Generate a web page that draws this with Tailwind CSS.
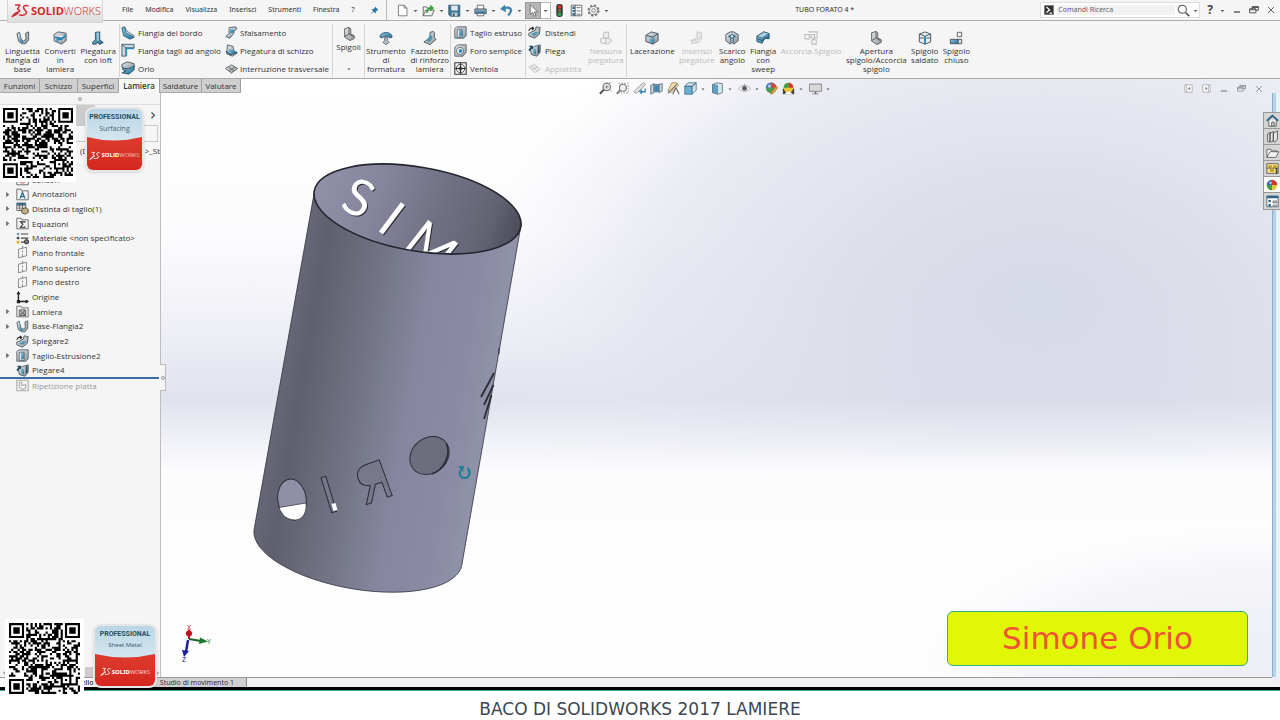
<!DOCTYPE html>
<html lang="it">
<head>
    <meta charset="UTF-8">
    <meta name="viewport" content="width=device-width, initial-scale=1.0">
    <title>TUBO FORATO 4 - SOLIDWORKS</title>
    <script src="https://cdn.jsdelivr.net/npm/@tailwindcss/browser@4"></script>
</head>
<body class="bg-white font-['Noto_Sans',sans-serif] text-[7px] text-[#333]">

    <!-- Icon sprite -->
    <svg class="absolute size-0" aria-hidden="true">
        <linearGradient id="steel" x1="0" y1="0" x2="1" y2="1"><stop offset="0" stop-color="#e3e8eb"/><stop offset="1" stop-color="#8e999f"/></linearGradient>
        <linearGradient id="blue" x1="0" y1="0" x2="1" y2="1"><stop offset="0" stop-color="#8cc3df"/><stop offset="1" stop-color="#256f96"/></linearGradient>
        <symbol id="ds" viewBox="0 0 24 22">
            <g fill="none" stroke="currentColor" stroke-linecap="round" stroke-linejoin="round">
                <path stroke-width="1.8" d="M6 3h6L8.500 8.500c4 0 3 4-.5 6.500C5.500 17 3 18 1.500 18.500 4 15 8 12.500 12 11"/>
                <path stroke-width="2" d="M22.500 4c-4-1-7 .5-5.500 3.500 1 2.500 4.500 4 3.500 6.500-1 2-5 3-9 2.500"/>
            </g>
        </symbol>
        <symbol id="caret" viewBox="0 0 8 8"><path fill="#555" d="M1 3h6L4 6.500z"/></symbol>
        <symbol id="pin" viewBox="0 0 16 16"><path fill="#2c79ae" d="M9 1l6 6-2 .5-2.500 2.500-.5 3.500L6.500 10 1 15l4.500-6L2.500 6 6 5.500 8.500 3z"/></symbol>
        <symbol id="new" viewBox="0 0 16 16"><path fill="#fff" stroke="#666" d="M3 1.500h7l3.500 3.500v9.500H3zM10 1.500V5h3.500"/></symbol>
        <symbol id="open" viewBox="0 0 16 16"><path fill="#f3f3f3" stroke="#555" d="M1.500 14.500V3.500h4l1 1.500H12v3M1.500 14.500l3-7h10.500l-3 7z"/><path fill="none" stroke="#35a13a" stroke-width="2" d="M6 11c0-5 2-6 5-6"/><path fill="#35a13a" d="M10 1l5 4-5 4z"/></symbol>
        <symbol id="save" viewBox="0 0 16 16"><path fill="#3f7897" stroke="#29536b" d="M1 1.500h13.500V15H3l-2-2z"/><path fill="#dde8ee" d="M4 2h8v6H4z"/><path fill="#c3ced4" d="M4.500 10.500h7V15h-7z"/><path fill="#29536b" d="M6 11.500h2V15H6z"/></symbol>
        <symbol id="print" viewBox="0 0 16 16"><path fill="#fff" stroke="#555" d="M4 6V1.500h8V6"/><path fill="#8ca0ac" stroke="#4a5a64" d="M1 6h14v6H1z"/><path fill="#2f7eaa" d="M2 9h12v2H2z"/><path fill="#fff" stroke="#555" d="M4 11.500h8v3H4z"/></symbol>
        <symbol id="undo" viewBox="0 0 16 16"><path fill="none" stroke="#3a82b0" stroke-width="2.800" d="M4 5.500c6-2.500 10-.5 9.500 3-.3 2-1.500 3.500-3.500 5.500"/><path fill="#3a82b0" d="M0 6l6-5 1.500 9z"/></symbol>
        <symbol id="arrow" viewBox="0 0 16 16"><path fill="#fff" stroke="#444" stroke-width=".8" d="M4 1v12l3-2.500L9 15l2-1-2-4.200 4-.3z"/></symbol>
        <symbol id="light" viewBox="0 0 16 16"><rect x="4" y="0" width="8" height="16" rx="3" fill="#3c3c3c"/><circle cx="8" cy="3.500" r="2.300" fill="#d33"/><circle cx="8" cy="8" r="1.900" fill="#7a6a3a"/><circle cx="8" cy="12.500" r="2.300" fill="#2da44a"/></symbol>
        <symbol id="props" viewBox="0 0 16 16"><path fill="#fff" stroke="#555" d="M1.500 1.500h13v13h-13z"/><path fill="#2d6f93" d="M3 3h3v3H3zm0 4h3v3H3zm0 4h3v3H3z"/><path stroke="#555" d="M6.500 1.500v13M8 4.500h5M8 8.500h5M8 12.500h5"/></symbol>
        <symbol id="gear" viewBox="0 0 16 16"><circle cx="8" cy="8" r="6.300" fill="none" stroke="#777" stroke-width="2.200" stroke-dasharray="2.600 2.350"/><circle cx="8" cy="8" r="5.200" fill="#f4f4f4" stroke="#666"/><circle cx="8" cy="8" r="2.200" fill="#fff" stroke="#666"/></symbol>
        <symbol id="cmd" viewBox="0 0 16 16"><path fill="#333" stroke="#888" d="M.5.5h15v15H.5z"/><path fill="none" stroke="#fff" stroke-width="2" d="M4 3l5 5-5 4M9 13h4"/></symbol>
        <symbol id="lens" viewBox="0 0 16 16"><circle cx="6.500" cy="6.500" r="5" fill="#fff" stroke="#555" stroke-width="1.300"/><path stroke="#555" stroke-width="2" d="M10.500 10.500l4.500 4.500"/></symbol>
        <symbol id="min" viewBox="0 0 16 16"><path stroke="currentColor" stroke-width="2.500" d="M2 12h12"/></symbol>
        <symbol id="restore" viewBox="0 0 16 16"><path fill="none" stroke="currentColor" stroke-width="1.400" d="M5 6V2.500h10v6h-4M1 6h10v6.500H1zM1 7.500h10M5 4h10"/></symbol>
        <symbol id="close" viewBox="0 0 16 16"><path stroke="currentColor" stroke-width="1.600" d="M2 2l12 12M14 2L2 14"/></symbol>
        <symbol id="dockl" viewBox="0 0 16 16"><path fill="#fff" stroke="#888" d="M1.500 1.500h13v13h-13zM4.500 1.500v13"/><path fill="#777" d="M11 5v6L7 8z"/></symbol>
        <symbol id="dockr" viewBox="0 0 16 16"><path fill="#fff" stroke="#888" d="M1.500 1.500h13v13h-13zM11.500 1.500v13"/><path fill="#777" d="M6 5v6l4-3z"/></symbol>

        <symbol id="base" viewBox="0 0 16 16"><path fill="url(#steel)" stroke="#48545c" d="M1 3l3-1.500 2 8 2.500 2 3-2-.5-7L14.500 1v9l-3.500 4.500H7L3 12z"/><path fill="url(#blue)" d="M4 2l2 7.500 2.500 2L7 14l-3-2.500z"/></symbol>
        <symbol id="convert" viewBox="0 0 16 16"><path fill="url(#steel)" stroke="#48545c" d="M1 4l5-3 9 1.500V11l-5 4-8.500-3.500z"/><path fill="#f5f5f5" d="M4 5l8 1v5l-8-2z"/><path fill="none" stroke="#3287b0" stroke-width="2" d="M2 7l9 1.500 3.500-4M5 12V9l6 1"/></symbol>
        <symbol id="loft" viewBox="0 0 16 16"><path fill="url(#blue)" stroke="#2b5267" d="M5 1.500l5-.5v9l4 3-3 2H9L8 12l-2 3H2l-.5-2L5 10z"/><path fill="#a5c8d9" d="M7 2h2v9H7z"/></symbol>
        <symbol id="edge" viewBox="0 0 16 16"><path fill="url(#blue)" stroke="#285e7b" d="M1 2l3-1 2 5 8 5 1 2-5 2-7-4z"/><path fill="#cce0e9" stroke="#3f5966" stroke-width=".7" d="M4 1l3 5 8 5-1 1-8-4z"/></symbol>
        <symbol id="miter" viewBox="0 0 16 16"><path fill="#bfd8e4" stroke="#47565f" d="M1 1.500h14v4H5.500V15H1z"/><path fill="#3089b2" d="M5.500 5.500H15V7H7v8H5.500z"/><path stroke="#47565f" d="M1 1.500l4.500 4"/></symbol>
        <symbol id="hem" viewBox="0 0 16 16"><path fill="url(#steel)" stroke="#475058" d="M1 4l6-3 8 2v4l-5 2H4L1 7z"/><path fill="url(#blue)" stroke="#244c61" d="M2 7.500c4 2.500 9 1 13-2V10l-6 5-8-1.500 5-2.500-4-1z"/></symbol>
        <symbol id="jog" viewBox="0 0 16 16"><path fill="url(#steel)" stroke="#48545c" d="M5 2l8-1 2 2-4 3v3l-5 6-5-2 4-4z"/><path fill="url(#blue)" d="M5 3l6 2v3L7 9 5 7z"/></symbol>
        <symbol id="sketchbend" viewBox="0 0 16 16"><path fill="url(#steel)" stroke="#48545c" d="M3 1l7 2 1 6 4 2-6 4-7-3z"/><path fill="url(#blue)" d="M5 6l6 1 3 3-6 1-4-2z"/><path fill="none" stroke="#245a78" stroke-width="1.400" d="M1 9l6 4 8-3"/></symbol>
        <symbol id="cross" viewBox="0 0 16 16"><path fill="url(#steel)" stroke="#555" d="M.5 8L8 3.500 15.500 8 8 13.500z"/><path stroke="#555" stroke-width=".9" d="M4 6l7 5M12 6l-7 5"/></symbol>
        <symbol id="corner" viewBox="0 0 16 16"><path fill="url(#steel)" stroke="#555" d="M3 2l5-1.500L10 2v6l4 2v3l-5 2.500-6-4z"/><path fill="none" stroke="#555" d="M8 1v7l-5 3M8 8l5 3"/></symbol>
        <symbol id="form" viewBox="0 0 16 16"><path fill="url(#blue)" stroke="#2c5a72" d="M1 7c0-7 14-7 14 0l-3 1-2-2H6L4 8z"/><path fill="#b7c3c9" stroke="#556069" d="M6.500 7h3v4l2 2-3.500 2.500L4.500 13l2-2z"/></symbol>
        <symbol id="gusset" viewBox="0 0 16 16"><path fill="url(#steel)" stroke="#48545c" d="M8 1.500l4-1 1 1v6l2 2-7 6-7-3 7-5z"/><path fill="url(#blue)" d="M8 3l3 4-3 5-4 0z"/></symbol>
        <symbol id="cut" viewBox="0 0 16 16"><path fill="url(#steel)" stroke="#4d5960" d="M1 3l3-2h11v11l-3 3H1z"/><path fill="#f7f7f7" stroke="#4d5960" d="M4 4h6v10H4z"/><path fill="url(#blue)" d="M6 4.500h4V12L6 13.500z"/></symbol>
        <symbol id="hole" viewBox="0 0 16 16"><path fill="url(#steel)" stroke="#4d5960" d="M1 4l4-3h10v9l-4 5H1z"/><circle cx="7.500" cy="8.500" r="4.300" fill="#fff" stroke="#4d5960"/><circle cx="8" cy="8.500" r="2.300" fill="#2f86b0"/></symbol>
        <symbol id="vent" viewBox="0 0 16 16"><path fill="#f7f7f7" stroke="#333" stroke-width="1.300" d="M1 1h14v14H1z"/><circle cx="8" cy="8" r="5" fill="none" stroke="#333"/><circle cx="8" cy="8" r="2" fill="none" stroke="#333"/><path stroke="#333" stroke-width="1.400" d="M8 1v14M1 8h14"/></symbol>
        <symbol id="unfold" viewBox="0 0 16 16"><path fill="url(#steel)" stroke="#3f4b52" d="M1 9l8-4 1-4 5 1-1 8-6 5-7-3z"/><path fill="url(#blue)" d="M3 10l6-3 4 1-5 4z"/><path fill="none" stroke="#222" stroke-width="1.300" d="M1 6c1-3 3-4 5-3M5 1l2 2-2 2"/></symbol>
        <symbol id="fold" viewBox="0 0 16 16"><path fill="url(#steel)" stroke="#3f4b52" d="M3 6l5-3 7-2v9l-4 5-7-2z"/><path fill="url(#blue)" d="M7 5l3 2v6l-4-1z"/><path fill="#1c4660" d="M12 3l2-1v8l-2 2zM1 2h5v5L4.500 5.500 2 9 .5 7.500 3 4z"/></symbol>
        <symbol id="flat" viewBox="0 0 16 16"><path fill="#eee" stroke="#bbb" d="M1 6l7-3 7 6-6 4z"/><path fill="none" stroke="#bbb" d="M4 5l8 6M12 6l-7 3"/></symbol>
        <symbol id="nobend" viewBox="0 0 16 16"><path fill="#eaeaea" stroke="#bbb" d="M5 2l6-1v7H5zM2 9l9-1 4 3-5 4-8-2z"/><circle cx="5" cy="11" r="3" fill="#f4f4f4" stroke="#bbb"/></symbol>
        <symbol id="insbend" viewBox="0 0 16 16"><path fill="#eaeaea" stroke="#c2c2c2" d="M8 1l5 1v7l-3 4-8 1-1-3 7-3z"/><path fill="none" stroke="#c2c2c2" d="M2 11l7-1 3-3"/></symbol>
        <symbol id="rip" viewBox="0 0 16 16"><path fill="url(#steel)" stroke="#3f4b52" d="M1 5l6-4 8 2v8l-6 4-8-3z"/><path fill="none" stroke="#3f4b52" d="M1 5l8 2 6-4M9 7v8"/><path fill="url(#blue)" d="M5 7l3 1 4 2-3 4-4-2z"/></symbol>
        <symbol id="relief" viewBox="0 0 16 16"><path fill="url(#steel)" stroke="#3f4b52" d="M1 4l5-3h4l5 3v7l-5 4-2-2-2 2-5-4z"/><path fill="#27607f" d="M4 5h8v2h-2v6H9V7H7v6H6V7H4z"/><circle cx="8" cy="6" r="2" fill="#d9e7ee" stroke="#27607f"/></symbol>
        <symbol id="sweep" viewBox="0 0 16 16"><path fill="url(#blue)" stroke="#22526c" d="M1 6l8-5 6 2v6l-5-1-3 6-6-2z"/><path fill="#a9cfe0" stroke="#22526c" stroke-width=".7" d="M1 6l8-5 6 2-8 5z"/><path stroke="#22526c" d="M2 9l5 2 8-5" fill="none"/></symbol>
        <symbol id="trim" viewBox="0 0 16 16"><path fill="none" stroke="#bdbdbd" stroke-width="1.200" d="M5 1h10v7h-3M1 4h5v5H1zM8 4h4v4H8zM9 10h5v5H9zM6 6.500h2M11 8v2"/></symbol>
        <symbol id="weld" viewBox="0 0 16 16"><path fill="#e5ebee" stroke="#3f4b52" d="M1.500 3.500L8 1l6.500 2.500v9L8 15l-6.500-2.500z"/><path fill="none" stroke="#3f4b52" d="M1.500 3.500L8 6l6.500-2.500M1.500 8h5M9.500 8h5"/><path stroke="#2f86b0" stroke-width="2.200" d="M8 6v9"/></symbol>
        <symbol id="closed" viewBox="0 0 16 16"><path fill="#f7f7f7" stroke="#555" d="M9.500 1.500h5v5h-5z"/><path fill="url(#blue)" stroke="#3f4b52" d="M1.500 9.500h9v5h-9z"/><path fill="#ddd" stroke="#3f4b52" d="M10.500 9.500h4v5h-4z"/></symbol>

        <symbol id="zoomfit" viewBox="0 0 16 16"><circle cx="9.500" cy="6" r="4.500" fill="#eef3f6" stroke="#777" stroke-width="1.500"/><path stroke="#555" stroke-width="2.500" d="M6 9.500L1 14.500"/><path stroke="#777" d="M9.500 3.500v5M7 6h5M13 1l2-1M14 10l2 2"/></symbol>
        <symbol id="zoomarea" viewBox="0 0 16 16"><path fill="none" stroke="#888" stroke-dasharray="2 1.500" d="M3 1.500h12v12H6"/><circle cx="8.500" cy="7" r="4.300" fill="#eef3f6" stroke="#777" stroke-width="1.300"/><path stroke="#777" stroke-width="2.300" d="M5.500 10L1 14.500"/></symbol>
        <symbol id="prev" viewBox="0 0 16 16"><path fill="#e4e4e4" stroke="#888" d="M1 12l8-8 4-3 2 2-3 4-8 7z"/><path fill="none" stroke="#3b89b5" stroke-width="1.600" d="M15 8v4H9M11 9.500L8.500 12l2.500 2.500"/></symbol>
        <symbol id="section" viewBox="0 0 16 16"><path fill="#c7d9e3" stroke="#4d6471" d="M1 4l4-2v11l-4 2zM5 3h6v9H5zM11 3l4-1v9l-4 2z"/><path fill="#3d8ab2" d="M6 4h4v8H6z"/></symbol>
        <symbol id="style" viewBox="0 0 16 16"><path fill="#f5dfae" stroke="#9a8456" d="M6 1l6 0 2 3-9 9-4-2z"/><path stroke="#6b6b6b" stroke-width="1.400" d="M1 14L12 3M11 7l4 8M11 7l-4 8"/></symbol>
        <symbol id="orient" viewBox="0 0 16 16"><path fill="#6fb0d0" stroke="#3e6b82" d="M1 5h9v10H1z"/><path fill="#d7e6ee" stroke="#3e6b82" d="M1 5l4-4h10l-5 4zM10 5l5-4v9l-5 5z"/></symbol>
        <symbol id="cube" viewBox="0 0 16 16"><path fill="#d7e6ee" stroke="#566c78" d="M2 3l5-2 7 1v11l-5 2-7-2z"/><path fill="#5ba4c8" stroke="#566c78" stroke-width=".7" d="M2 3l6 1v11l-6-2z"/></symbol>
        <symbol id="eye" viewBox="0 0 16 16"><path fill="#fff" stroke="#999" d="M1 8c4-5 10-5 14 0-4 4.500-10 4.500-14 0z"/><circle cx="8" cy="7.800" r="3" fill="#5c5c5c"/><path stroke="#999" d="M8 2v2"/></symbol>
        <symbol id="ball" viewBox="0 0 16 16"><circle cx="8" cy="8" r="7" fill="#e8c53c"/><path fill="#d5332c" d="M8 1a7 7 0 0 1 7 7H8z"/><path fill="#2f66bd" d="M8 1a7 7 0 0 0-7 7h7z"/><path fill="#36a04b" d="M1 8a7 7 0 0 0 7 7V8z"/><circle cx="6" cy="5" r="2" fill="#fff" opacity=".5"/></symbol>
        <symbol id="appear" viewBox="0 0 16 16"><circle cx="7.500" cy="7" r="6.500" fill="#4a9a52"/><path fill="#d5453c" d="M7.500.5A6.500 6.500 0 0 1 14 7H7.500z"/><path fill="#4a7fc6" d="M7.500.5A6.500 6.500 0 0 0 1 7h6.500z"/><circle cx="5.500" cy="5" r="2" fill="#fff" opacity=".6"/><path fill="#e6a83a" stroke="#8a5a22" stroke-width=".7" d="M14 5l2 2-6 7-3 1 1-3z"/></symbol>
        <symbol id="scene" viewBox="0 0 16 16"><path fill="#444" d="M1 8h14v7H1z"/><circle cx="8" cy="7" r="6" fill="#e8c53c"/><path fill="#d5332c" d="M8 1a6 6 0 0 1 6 6H8z"/><path fill="#36a04b" d="M8 1a6 6 0 0 0-6 6h6z"/><path fill="#fff" d="M3 15l3-3h4l3 3z"/></symbol>
        <symbol id="screen" viewBox="0 0 16 16"><path fill="#d8d8d8" stroke="#777" d="M.5 2.500h15v9H.5z"/><path fill="#777" d="M7 12h2v2h3v1H4v-1h3z"/></symbol>

        <symbol id="home" viewBox="0 0 16 16"><path fill="#fff" stroke="#444" d="M3.500 8v7h9V8M7 15v-5h3v5"/><path fill="none" stroke="#25607f" stroke-width="2.200" d="M1 8.500L8 2l7 6.500"/></symbol>
        <symbol id="library" viewBox="0 0 16 16"><path fill="#e9e9e9" stroke="#444" d="M2 5l3-2v10l-1 2-2-1zM5 4l4-2v10l-2 3-2-1zM9 4l5-3v10l-3 4-2-1z"/></symbol>
        <symbol id="folder" viewBox="0 0 16 16"><path fill="#f3f3f3" stroke="#555" d="M1 14V4h5l1 2h6v2M1 14l4-7h11l-4 7z"/></symbol>
        <symbol id="palette" viewBox="0 0 16 16"><path fill="#f6e28d" stroke="#555" d="M1 2h14v12H1z"/><path fill="#c79a16" d="M3 4h4v3H3zm6 0h4v3H9zM5 9h5v3H5z"/><path fill="#444" d="M12 8h2v6h-2zM1 7h14v1H1z"/></symbol>
        <symbol id="list" viewBox="0 0 16 16"><path fill="#fff" stroke="#3e5d6d" d="M1 1.500h14v13H1z"/><path fill="#2c6685" d="M1 1h14v3H1zM3 6h3v3H3zm0 5h3v3H3z"/><path stroke="#444" d="M8 7.500h6M8 9.500h6M8 12.500h6"/></symbol>

        <symbol id="fsens" viewBox="0 0 16 16"><path fill="#f5f5f5" stroke="#555" d="M1 14.500v-13h5l1 2h8v11z"/><circle cx="8" cy="9" r="3.500" fill="none" stroke="#c33"/><path stroke="#c33" d="M8 9l2-3"/></symbol>
        <symbol id="fann" viewBox="0 0 16 16"><path fill="#f5f5f5" stroke="#555" d="M1 14.500v-13h5l1 2h8v11z"/><path fill="none" stroke="#23678c" stroke-width="1.500" d="M5 13l3-7.500 3 7.500M6 10.500h4"/></symbol>
        <symbol id="fcut" viewBox="0 0 16 16"><path fill="#fff" stroke="#555" d="M1 1.500h11v9H1zM1 4.500h11M4.500 1.500v9M8 1.500v9M1 7.500h11"/><path fill="#2c6685" d="M1 1h11v2.500H1z"/><path fill="#c3b184" stroke="#444" d="M7 9l5-2 3 2v4l-4 2-4-2z"/></symbol>
        <symbol id="feq" viewBox="0 0 16 16"><path fill="#f5f5f5" stroke="#555" d="M1 14.500v-13h5l1 2h8v11z"/><path fill="none" stroke="#333" stroke-width="1.300" d="M11 7V6H5.500L8.500 9l-3 3.500H11v-1"/></symbol>
        <symbol id="fmat" viewBox="0 0 16 16"><path stroke="#444" stroke-width="1.400" d="M6 2.500h9M6 7.500h9M6 12.500h5"/><circle cx="2.500" cy="2.500" r="1.700" fill="#7c9aa8"/><circle cx="2.500" cy="7.500" r="1.700" fill="#444"/><circle cx="2.500" cy="12.500" r="1.900" fill="#e1b432"/><circle cx="13" cy="12" r="2.700" fill="#777" stroke="#222"/></symbol>
        <symbol id="plane" viewBox="0 0 16 16"><path fill="none" stroke="#777" d="M3 4l10-2.500v10.500L3 14.500zM8 0v3M8 5.500v2.500M8 10v3"/></symbol>
        <symbol id="origin" viewBox="0 0 16 16"><path fill="none" stroke="#222" stroke-width="1.700" d="M3 2v11h11"/><path fill="#222" d="M.5 4L3 0l2.500 4zM12 10.500l4 2.500-4 2.500zM1 11h4v4H1z"/></symbol>
        <symbol id="fsheet" viewBox="0 0 16 16"><path fill="#f5f5f5" stroke="#555" d="M1 14.500v-13h5l1 2h8v11z"/><path fill="url(#steel)" stroke="#444" d="M4 6h8v7H4z"/><path stroke="#444" d="M5 7l6 5M11 7l-6 5"/></symbol>
        <symbol id="fflat" viewBox="0 0 16 16"><path fill="#f5f5f5" stroke="#aaa" stroke-width="1.300" d="M1 1.500h14v13H1z"/><path fill="none" stroke="#aaa" stroke-width="1.300" d="M4 4h3v4l5-1v4l-4 2-4-3z"/></symbol>
        <symbol id="tri" viewBox="0 0 8 8"><path fill="#666" d="M2.500 1l3.500 3-3.500 3z"/></symbol>
    </svg>

    <div class="flex min-h-screen flex-col">
        <!-- Title bar -->
        <header class="relative z-10 flex h-[21px] items-center border-b border-[#b0b0b0] bg-[#f5f5f5]">
            <a href="#" class="ml-[7px] flex h-[23px] w-[96px] shrink-0 items-center self-start border border-t-0 border-[#d5d5d5] bg-linear-to-b from-[#fbfbfb] to-[#dcdcdc] pl-[3px] font-['Open_Sans',sans-serif] text-[11px] text-[#cf2b31]">
                <svg class="mr-[2px] h-[18px] w-[18px]"><use href="#ds"/></svg><b>SOLID</b><span class="font-light">WORKS</span>
            </a>
            <nav class="ml-[19px] flex w-[240px] shrink-0 items-center gap-3">
                <a href="#">File</a><a href="#">Modifica</a><a href="#">Visualizza</a><a href="#">Inserisci</a><a href="#">Strumenti</a><a href="#">Finestra</a><a href="#">?</a>
            </nav>
            <button class="ml-2" aria-label="Blocca menu"><svg class="size-[9px]"><use href="#pin"/></svg></button>
            <div class="ml-[7px] flex h-full items-center border-l border-[#bbb] pl-[9px]">
                <button aria-label="Nuovo"><svg class="size-[13px]"><use href="#new"/></svg></button>
                <button class="mx-1" aria-label="Opzioni nuovo"><svg class="size-[5px]"><use href="#caret"/></svg></button>
                <button aria-label="Apri"><svg class="size-[13px]"><use href="#open"/></svg></button>
                <button class="mx-1" aria-label="Opzioni apri"><svg class="size-[5px]"><use href="#caret"/></svg></button>
                <button aria-label="Salva"><svg class="size-[13px]"><use href="#save"/></svg></button>
                <button class="mx-1" aria-label="Opzioni salva"><svg class="size-[5px]"><use href="#caret"/></svg></button>
                <button aria-label="Stampa"><svg class="size-[13px]"><use href="#print"/></svg></button>
                <button class="mx-1" aria-label="Opzioni stampa"><svg class="size-[5px]"><use href="#caret"/></svg></button>
                <button aria-label="Annulla"><svg class="size-[13px]"><use href="#undo"/></svg></button>
                <button class="ml-1 mr-[3px]" aria-label="Opzioni annulla"><svg class="size-[5px]"><use href="#caret"/></svg></button>
                <button class="flex h-[17px] w-4 items-center justify-center border border-[#999] bg-[#b5b5b5]" aria-label="Seleziona"><svg class="size-[13px]"><use href="#arrow"/></svg></button>
                <button class="flex h-[17px] w-[10px] items-center justify-center border border-l-0 border-[#bbb] bg-white" aria-label="Opzioni selezione"><svg class="size-[5px]"><use href="#caret"/></svg></button>
                <button class="ml-[2px]" aria-label="Ricostruisci"><svg class="size-[13px]"><use href="#light"/></svg></button>
                <button class="ml-1" aria-label="Proprietà file"><svg class="size-[13px]"><use href="#props"/></svg></button>
                <button class="ml-1" aria-label="Opzioni"><svg class="size-[13px]"><use href="#gear"/></svg></button>
                <button class="ml-1" aria-label="Altre opzioni"><svg class="size-[5px]"><use href="#caret"/></svg></button>
            </div>
            <h1 class="flex-1 text-center">TUBO FORATO 4 *</h1>
            <form class="flex h-4 w-40 items-center border border-[#ddd] bg-white pl-[3px]">
                <svg class="size-[10px]"><use href="#cmd"/></svg>
                <input type="text" aria-label="Comandi Ricerca" placeholder="Comandi Ricerca" class="ml-[3px] w-[118px] bg-[#f1f1f3] pl-px placeholder:text-[#666]">
                <button type="button" class="ml-[2px]" aria-label="Cerca"><svg class="size-[13px]"><use href="#lens"/></svg></button>
                <button type="button" class="ml-[3px]" aria-label="Opzioni ricerca"><svg class="size-[5px]"><use href="#caret"/></svg></button>
            </form>
            <div class="ml-[7px] flex items-center pr-[5px] text-[#444]">
                <button class="text-[12px] font-bold" aria-label="Guida">?</button>
                <button class="ml-[7px]" aria-label="Opzioni guida"><svg class="size-[5px]"><use href="#caret"/></svg></button>
                <button class="ml-2" aria-label="Riduci"><svg class="size-2"><use href="#min"/></svg></button>
                <button class="ml-2" aria-label="Ripristina"><svg class="size-[10px]"><use href="#restore"/></svg></button>
                <button class="ml-2" aria-label="Chiudi"><svg class="size-2"><use href="#close"/></svg></button>
            </div>
        </header>

        <!-- Ribbon -->
        <section class="flex h-[58px] border-b border-[#a8a8a8] bg-[#f5f5f5] pt-[3px] pb-px text-center font-['Open_Sans',sans-serif] text-[8px] leading-[9px] whitespace-nowrap">
            <div class="flex w-[120px] items-start justify-between border-r border-[#d5d5d5] pt-[7px] pr-[3px] pl-[5px]">
                <button><svg class="mx-auto mb-px size-[14px]"><use href="#base"/></svg>Linguetta<br>flangia di<br>base</button>
                <button><svg class="mx-auto mb-px size-[14px]"><use href="#convert"/></svg>Converti<br>in<br>lamiera</button>
                <button><svg class="mx-auto mb-px size-[14px]"><use href="#loft"/></svg>Piegatura<br>con loft</button>
            </div>
            <div class="grid w-[213px] grid-cols-[104px_auto] grid-rows-3 items-center border-r border-[#d5d5d5] pl-px">
                <button class="flex items-center gap-[3px]"><svg class="size-[14px]"><use href="#edge"/></svg>Flangia del bordo</button>
                <button class="flex items-center gap-[2px]"><svg class="size-[13px]"><use href="#jog"/></svg>Sfalsamento</button>
                <button class="flex items-center gap-[3px]"><svg class="size-[14px]"><use href="#miter"/></svg>Flangia tagli ad angolo</button>
                <button class="flex items-center gap-[2px]"><svg class="size-[13px]"><use href="#sketchbend"/></svg>Piegatura di schizzo</button>
                <button class="flex items-center gap-[3px]"><svg class="size-[14px]"><use href="#hem"/></svg>Orlo</button>
                <button class="flex items-center gap-[2px]"><svg class="size-[13px]"><use href="#cross"/></svg>Interruzione trasversale</button>
            </div>
            <div class="w-8 border-r border-[#d5d5d5] pt-[3px]">
                <button><svg class="mx-auto mb-px size-[14px]"><use href="#corner"/></svg>Spigoli<svg class="mx-auto mt-4 size-1"><use href="#caret"/></svg></button>
            </div>
            <div class="flex w-[86px] items-start justify-between border-r border-[#d5d5d5] px-px pt-[7px]">
                <button><svg class="mx-auto mb-px size-[14px]"><use href="#form"/></svg>Strumento<br>di<br>formatura</button>
                <button><svg class="mx-auto mb-px size-[14px]"><use href="#gusset"/></svg>Fazzoletto<br>di rinforzo<br>lamiera</button>
            </div>
            <div class="grid w-[75px] grid-rows-3 border-r border-[#d5d5d5] pl-[3px]">
                <button class="flex items-center gap-[3px]"><svg class="size-[13px]"><use href="#cut"/></svg>Taglio estruso</button>
                <button class="flex items-center gap-[3px]"><svg class="size-[13px]"><use href="#hole"/></svg>Foro semplice</button>
                <button class="flex items-center gap-[3px]"><svg class="size-[13px]"><use href="#vent"/></svg>Ventola</button>
            </div>
            <div class="flex w-[101px] border-r border-[#d5d5d5] pl-[2px]">
                <div class="grid w-[60px] grid-rows-3">
                    <button class="flex items-center gap-1"><svg class="size-[13px]"><use href="#unfold"/></svg>Distendi</button>
                    <button class="flex items-center gap-1"><svg class="size-[13px]"><use href="#fold"/></svg>Piega</button>
                    <button class="flex items-center gap-1 text-[#bbb]" disabled><svg class="size-[13px]"><use href="#flat"/></svg>Appiattita</button>
                </div>
                <button class="self-start pt-[7px] text-[#bbb]" disabled><svg class="mx-auto mb-px size-[14px]"><use href="#nobend"/></svg>Nessuna<br>piegatura</button>
            </div>
            <div class="flex w-[343px] items-start justify-between pt-[7px] pl-[3px]">
                <button><svg class="mx-auto mb-px size-[14px]"><use href="#rip"/></svg>Lacerazione</button>
                <button class="text-[#bbb]" disabled><svg class="mx-auto mb-px size-[14px]"><use href="#insbend"/></svg>Inserisci<br>piegature</button>
                <button><svg class="mx-auto mb-px size-[14px]"><use href="#relief"/></svg>Scarico<br>angolo</button>
                <button><svg class="mx-auto mb-px size-[14px]"><use href="#sweep"/></svg>Flangia<br>con<br>sweep</button>
                <button class="text-[#bbb]" disabled><svg class="mx-auto mb-px size-[14px]"><use href="#trim"/></svg>Accorcia-Spigolo</button>
                <button><svg class="mx-auto mb-px size-[14px]"><use href="#corner"/></svg>Apertura<br>spigolo/Accorcia<br>spigolo</button>
                <button><svg class="mx-auto mb-px size-[14px]"><use href="#weld"/></svg>Spigolo<br>saldato</button>
                <button><svg class="mx-auto mb-px size-[14px]"><use href="#closed"/></svg>Spigolo<br>chiuso</button>
            </div>
        </section>

        <main class="relative flex flex-1 flex-col overflow-hidden">
            <!-- Model view -->
            <svg class="absolute inset-0 size-full" viewBox="0 79 1280 608" preserveAspectRatio="xMinYMin slice">
                <defs>
                    <linearGradient id="sky" x1="0" y1="0" x2="0" y2="1">
                        <stop offset="0" stop-color="#fff"/><stop offset=".25" stop-color="#fcfcfe"/><stop offset=".4" stop-color="#f0f1f7"/><stop offset=".53" stop-color="#e0e2ed"/><stop offset=".57" stop-color="#e6e8f1"/><stop offset=".61" stop-color="#f5f6fa"/><stop offset=".67" stop-color="#fff"/><stop offset="1" stop-color="#fdfdfe"/>
                    </linearGradient>
                    <radialGradient id="haze" cx=".5" cy=".5" r=".5"><stop offset="0" stop-color="#d6dae6"/><stop offset=".35" stop-color="#dadde9" stop-opacity=".9"/><stop offset=".7" stop-color="#e0e2ed" stop-opacity=".65"/><stop offset="1" stop-color="#e8e9f2" stop-opacity="0"/></radialGradient>
                    <linearGradient id="floor" x1="0" y1="0" x2="0" y2="1"><stop offset="0" stop-color="#eceef5" stop-opacity="0"/><stop offset=".35" stop-color="#f1f2f7" stop-opacity=".75"/><stop offset=".6" stop-color="#fcfcfe"/><stop offset="1" stop-color="#fdfdfe"/></linearGradient>
                    <linearGradient id="outer" gradientUnits="userSpaceOnUse" x1="284" y1="360" x2="492" y2="396">
                        <stop offset="0" stop-color="#666777"/><stop offset=".1" stop-color="#5f606e"/><stop offset=".25" stop-color="#696a7a"/><stop offset=".45" stop-color="#787a8d"/><stop offset=".62" stop-color="#8686a0"/><stop offset=".85" stop-color="#8a8aa4"/><stop offset="1" stop-color="#9093a8"/>
                    </linearGradient>
                    <linearGradient id="inner" gradientUnits="userSpaceOnUse" x1="314" y1="190" x2="521" y2="226">
                        <stop offset="0" stop-color="#9090a8"/><stop offset=".3" stop-color="#85869d"/><stop offset=".6" stop-color="#707184"/><stop offset=".85" stop-color="#626372"/><stop offset="1" stop-color="#4a4b57"/>
                    </linearGradient>
                    <clipPath id="rim"><ellipse cx="417.500" cy="209" rx="104" ry="41" transform="rotate(9.800 417.500 209)"/></clipPath>
                </defs>
                <path fill="url(#sky)" d="M0 79h1280v608H0z"/>
                <ellipse cx="1040" cy="300" rx="560" ry="370" fill="url(#haze)"/>
                <path fill="url(#floor)" d="M0 400h1280v120H0z"/>
                <path fill="#fdfdfe" d="M0 519h1280v168H0z"/>
                <ellipse cx="1260" cy="660" rx="330" ry="130" fill="url(#haze)" opacity=".4"/>
                <path fill="url(#outer)" stroke="#30313b" stroke-width=".8" d="M314 194L254 530A105 42 9.800 0 0 462 564L521 225A105 42 9.800 0 0 314 194z"/>
                <ellipse cx="417.500" cy="209" rx="104.800" ry="41.900" transform="rotate(9.800 417.500 209)" fill="url(#inner)" stroke="#23242d" stroke-width="1.600"/>
                <g clip-path="url(#rim)" fill="#fff" font-family="Lato, sans-serif" font-size="51">
                    <g fill="#2b2c35">
                        <text transform="translate(352 215) rotate(25)" text-anchor="middle">S</text>
                        <text transform="translate(382 234) rotate(37)" text-anchor="middle">I</text>
                        <text transform="translate(403 247) rotate(38)">M</text>
                    </g>
                    <text transform="translate(351 214) rotate(25)" text-anchor="middle">S</text>
                    <text transform="translate(381 233) rotate(37)" text-anchor="middle">I</text>
                    <text transform="translate(402 246) rotate(38)">M</text>
                </g>
                <g stroke="#2b2c35">
                    <ellipse cx="292" cy="499.500" rx="14.200" ry="20.500" transform="rotate(-8 292 499.500)" fill="#8f8fa8"/>
                    <path fill="#fff" stroke-width=".7" d="M279 507.500l27-4.500c1 9-3 16.500-10.500 17-8.500 0-13.500-4.500-16.500-12.500z"/>
                    <ellipse cx="429.500" cy="455.500" rx="21" ry="17.500" transform="rotate(-40 429.500 455.500)" fill="#6d6e7d"/>
                    <path fill="none" stroke-width="1.600" d="M446.500 444c4.500 10-2 26-15 30"/>
                    <path stroke-width="1.800" d="M481 397l13-24M484 405l9.500-20M484 419l7.500-24"/>
                    <path stroke-width="1" d="M499 348v6"/>
                </g>
                <g fill="#77788b" stroke="#2b2c35">
                    <text transform="translate(334 512) rotate(-17)" text-anchor="middle" font-family="Lato, sans-serif" font-size="51">I</text>
                    <text transform="translate(363 506) rotate(-20)" font-size="52" font-family="'DejaVu Sans', sans-serif">Я</text>
                    <path stroke="none" d="M359 474c1-4 5-6 16-10l2.500 1 4.500 14-1 2-13 4c-6 0-10-6-9-11z"/>
                </g>
                <path fill="#fff" d="M331.500 504l4-1 2 7-4 1z"/>
                <!-- Rotate cursor -->
                <path fill="none" stroke="#1f7f9c" stroke-width="2.200" d="M467.500 468c4 4 2 10-3 10-4 0-6-4-4-8"/><path fill="#1f7f9c" d="M458 466h6l-1 6z"/>
                <!-- Triad -->
                <g font-size="7" font-family="'Noto Sans', sans-serif">
                    <path stroke="#b01c22" stroke-width="2" d="M189 639v-8"/><path fill="#c1121c" d="M185.500 634l3.500-5 3.500 5z"/><circle cx="189" cy="633.500" r="3" fill="#c1121c"/>
                    <path stroke="#1b6a28" stroke-width="2" d="M189 639l12 2"/><path fill="#1d7a2d" d="M200 637.500l8 4-9 2.500z"/>
                    <path stroke="#1c229c" stroke-width="2.500" d="M188 640l-2 12"/><path fill="#1c229c" d="M182 650l7 1-5 6z"/>
                    <text x="187" y="630" fill="#c1121c">X</text><text x="207" y="644" fill="#1d7a2d">Y</text><text x="182" y="662" fill="#1c229c">Z</text>
                </g>
            </svg>

            <!-- Tabs and view toolbar -->
            <div class="relative flex h-[14px] items-start">
                <div class="flex h-full w-[241px] shrink-0 border-b border-[#aaa] bg-[#cfcfcf] text-center font-['Open_Sans',sans-serif] text-[8px]">
                    <button class="w-[40px] border-r border-[#a0a0a0]">Funzioni</button>
                    <button class="w-[38px] border-r border-[#a0a0a0]">Schizzo</button>
                    <button class="w-[41px] border-r border-[#a0a0a0]">Superfici</button>
                    <button class="h-[14px] w-[40px] bg-[#f8f8f8] font-semibold">Lamiera</button>
                    <button class="w-[43px] border-x border-[#a0a0a0]">Saldature</button>
                    <button class="w-[39px] border-r border-[#a0a0a0]">Valutare</button>
                </div>
                <div class="flex flex-1 items-center justify-center gap-1 pt-[3px] pl-[3px]">
                    <button aria-label="Zoom adatta"><svg class="size-[13px]"><use href="#zoomfit"/></svg></button>
                    <button aria-label="Zoom area"><svg class="size-[13px]"><use href="#zoomarea"/></svg></button>
                    <button aria-label="Vista precedente"><svg class="size-[13px]"><use href="#prev"/></svg></button>
                    <button aria-label="Vista in sezione"><svg class="size-[13px]"><use href="#section"/></svg></button>
                    <button aria-label="Viste annotazione"><svg class="size-[13px]"><use href="#style"/></svg></button>
                    <button class="flex items-center gap-1" aria-label="Orientamento vista"><svg class="size-[13px]"><use href="#orient"/></svg><svg class="size-1"><use href="#caret"/></svg></button>
                    <button class="ml-[2px] flex items-center gap-1" aria-label="Stile visualizzazione"><svg class="size-[13px]"><use href="#cube"/></svg><svg class="size-1"><use href="#caret"/></svg></button>
                    <button class="ml-[2px] flex items-center gap-1" aria-label="Nascondi o mostra"><svg class="size-[13px]"><use href="#eye"/></svg><svg class="size-1"><use href="#caret"/></svg></button>
                    <button class="ml-[2px]" aria-label="Modifica aspetto"><svg class="size-[13px]"><use href="#appear"/></svg></button>
                    <button class="flex items-center gap-1" aria-label="Applica scena"><svg class="size-[13px]"><use href="#scene"/></svg><svg class="size-1"><use href="#caret"/></svg></button>
                    <button class="ml-[2px] flex items-center gap-1" aria-label="Impostazioni vista"><svg class="size-[13px]"><use href="#screen"/></svg><svg class="size-1"><use href="#caret"/></svg></button>
                </div>
                <div class="flex items-center gap-[9px] pt-[5px] pr-[17px] text-[#888]">
                    <button aria-label="Aggancia a sinistra"><svg class="size-[9px]"><use href="#dockl"/></svg></button>
                    <button aria-label="Aggancia a destra"><svg class="size-[9px]"><use href="#dockr"/></svg></button>
                    <button aria-label="Riduci documento"><svg class="size-2"><use href="#min"/></svg></button>
                    <button aria-label="Ripristina documento"><svg class="size-[9px]"><use href="#restore"/></svg></button>
                    <button aria-label="Chiudi documento"><svg class="size-2"><use href="#close"/></svg></button>
                </div>
            </div>

            <div class="relative flex flex-1">
                <!-- Feature tree -->
                <aside class="relative flex w-[161px] flex-col border-r border-[#bdbdbd] bg-[#f5f5f5] font-['Open_Sans',sans-serif] text-[8px]">
                    <div class="flex h-[12px] items-center justify-center border-b border-[#ddd]"><span class="size-1 rounded-full border border-[#999]"></span></div>
                    <div class="mr-[2px] flex h-5 items-center justify-end bg-linear-to-r from-[#ccc] from-60% to-[#f5f5f5] to-60% pr-[2px]">
                        <button class="font-['DejaVu_Sans',sans-serif] text-[15px] leading-4" aria-label="Altre schede">›</button>
                    </div>
                    <div class="mr-[2px] h-[17px] border border-[#c9c9c9]"></div>
                    <div class="flex h-[17px] items-center justify-between pl-20"><span>(D</span><span>&gt;_St</span></div>
                    <ul class="flex h-[218px] flex-col justify-between pt-[14px] *:flex *:h-[13px] *:items-center *:gap-[3px] *:pl-4">
                        <li><svg class="size-[13px]"><use href="#fsens"/></svg>Sensori</li>
                        <li><svg class="-ml-3 mr-[2px] size-[7px]"><use href="#tri"/></svg><svg class="size-[13px]"><use href="#fann"/></svg>Annotazioni</li>
                        <li><svg class="-ml-3 mr-[2px] size-[7px]"><use href="#tri"/></svg><svg class="size-[13px]"><use href="#fcut"/></svg>Distinta di taglio(1)</li>
                        <li><svg class="-ml-3 mr-[2px] size-[7px]"><use href="#tri"/></svg><svg class="size-[13px]"><use href="#feq"/></svg>Equazioni</li>
                        <li><svg class="size-[13px]"><use href="#fmat"/></svg>Materiale &lt;non specificato&gt;</li>
                        <li><svg class="size-[13px]"><use href="#plane"/></svg>Piano frontale</li>
                        <li><svg class="size-[13px]"><use href="#plane"/></svg>Piano superiore</li>
                        <li><svg class="size-[13px]"><use href="#plane"/></svg>Piano destro</li>
                        <li><svg class="size-[13px]"><use href="#origin"/></svg>Origine</li>
                        <li><svg class="-ml-3 mr-[2px] size-[7px]"><use href="#tri"/></svg><svg class="size-[13px]"><use href="#fsheet"/></svg>Lamiera</li>
                        <li><svg class="-ml-3 mr-[2px] size-[7px]"><use href="#tri"/></svg><svg class="size-[13px]"><use href="#base"/></svg>Base-Flangia2</li>
                        <li><svg class="size-[13px]"><use href="#unfold"/></svg>Spiegare2</li>
                        <li><svg class="-ml-3 mr-[2px] size-[7px]"><use href="#tri"/></svg><svg class="size-[13px]"><use href="#cut"/></svg>Taglio-Estrusione2</li>
                        <li><svg class="size-[13px]"><use href="#fold"/></svg>Piegare4</li>
                    </ul>
                    <div class="mr-px h-[2px] bg-[#3a6ca8]"></div>
                    <div class="flex h-[13px] items-center gap-[3px] pl-4 text-[#999]"><svg class="size-[13px]"><use href="#fflat"/></svg>Ripetizione piatta</div>
                    <div class="absolute top-[271px] -right-[6px] flex h-[27px] w-[6px] items-center justify-center border border-l-0 border-[#bbb] bg-[#f5f5f5]"><span class="size-1 rounded-full border border-[#999]"></span></div>
                    <div class="mt-auto flex h-[10px] items-center justify-between pr-px pl-[3px]"><span>‹</span><span class="ml-20 h-full flex-1 bg-[#cdcdcd]"></span><span>›</span></div>

                    <!-- Certification: surfacing -->
                    <div class="absolute top-[12px] left-0 bg-white p-[3px] pb-1"><svg class="qr size-[70px]" viewBox="0 0 33 33" data-seed="7" shape-rendering="geometricPrecision"></svg></div>
                    <div class="absolute top-[14px] left-[85px] flex h-[65px] w-[59px] flex-col overflow-hidden rounded-lg border-2 border-[#e6e6e6] bg-linear-to-b from-[#b9d6e6] to-[#eef5f9] text-center shadow">
                        <b class="mt-1 -mx-1 font-['Roboto',sans-serif] text-[7px] leading-[9px] text-[#1f4f63]">PROFESSIONAL</b>
                        <span class="text-[7px] leading-[13px] text-[#44606e]">Surfacing</span>
                        <svg class="mt-[2px] h-1 w-full fill-[#dc3a2c]" viewBox="0 0 60 4" preserveAspectRatio="none"><path d="M0 0q30 7 60 0v4H0z"/></svg>
                        <span class="flex flex-1 items-center justify-center bg-linear-to-b from-[#dc3a2c] to-[#d4261f] text-[6px] text-white"><svg class="mr-px h-[10px] w-[11px]"><use href="#ds"/></svg><b>SOLID</b><span class="font-light">WORKS</span></span>
                    </div>
                </aside>

                <!-- Task pane -->
                <div class="ml-auto flex w-2 flex-col border-l border-[#8fb0cc] bg-linear-to-r from-[#b9d2ea] from-50% to-[#e8f4f4] to-50%"></div>
                <div class="absolute top-[19px] right-0 flex w-[17px] flex-col border border-r-0 border-[#999] bg-[#d5d5d5] *:flex *:h-4 *:items-center *:justify-center *:border-b *:border-[#999] *:last:border-b-0">
                    <button aria-label="Risorse"><svg class="size-[13px]"><use href="#home"/></svg></button>
                    <button aria-label="Libreria"><svg class="size-[13px]"><use href="#library"/></svg></button>
                    <button aria-label="Esplora file"><svg class="size-[13px]"><use href="#folder"/></svg></button>
                    <button aria-label="Tavolozza viste"><svg class="size-[13px]"><use href="#palette"/></svg></button>
                    <button class="bg-white" aria-label="Aspetti"><svg class="size-3"><use href="#ball"/></svg></button>
                    <button aria-label="Proprietà"><svg class="size-[13px]"><use href="#list"/></svg></button>
                </div>

                <div class="absolute right-[32px] bottom-[11px] flex h-[55px] w-[301px] items-center justify-center rounded-md border border-[#2fae94] bg-[#e2f705] font-['DejaVu_Sans',sans-serif] text-[31px] text-[#ef5236]">Simone Orio</div>
            </div>

            <!-- Document tabs -->
            <div class="relative mr-2 flex h-[10px] border-t border-[#999] bg-[#f2f2f2] leading-[9px]">
                <button class="w-[100px] bg-white pl-[66px] text-left font-semibold">Modello</button>
                <button class="w-[147px] border-r border-[#888] bg-[#d0d0d0] pr-3 text-right">Studio di movimento 1</button>
            </div>
        </main>

        <footer class="relative border-t-3 border-black bg-white">
            <div class="flex h-[30px] items-center justify-center border-t border-[#3fae8c] pt-2 font-['DejaVu_Sans',sans-serif] text-[17px] text-[#3c4652]">BACO DI SOLIDWORKS 2017 LAMIERE</div>

            <!-- Certification: sheet metal -->
            <div class="absolute bottom-[22px] left-[5px] bg-white p-1"><svg class="qr size-[71px]" viewBox="0 0 33 33" data-seed="23" shape-rendering="geometricPrecision"></svg></div>
            <div class="absolute bottom-[32px] left-[93px] flex h-[64px] w-[64px] flex-col overflow-hidden rounded-lg border-2 border-[#e6e6e6] bg-linear-to-b from-[#b9d6e6] to-[#eef5f9] text-center shadow">
                <b class="mt-1 font-['Roboto',sans-serif] text-[7px] leading-[9px] text-[#1f4f63]">PROFESSIONAL</b>
                <span class="text-[6px] leading-[13px] text-[#44606e]">Sheet Metal</span>
                <svg class="mt-[2px] h-1 w-full fill-[#dc3a2c]" viewBox="0 0 60 4" preserveAspectRatio="none"><path d="M0 0q30 7 60 0v4H0z"/></svg>
                <span class="flex flex-1 items-center justify-center bg-linear-to-b from-[#dc3a2c] to-[#d4261f] text-[6px] text-white"><svg class="mr-px h-[10px] w-[11px]"><use href="#ds"/></svg><b>SOLID</b><span class="font-light">WORKS</span></span>
            </div>
        </footer>
    </div>

    <script>
        // fill the code squares: three finders, one alignment mark, seeded modules elsewhere
        const N = 33;
        const ring = (x, y, cx, cy, r) => {
            const d = Math.max(Math.abs(x - cx), Math.abs(y - cy));
            return d > r ? null : (r === 4 ? d < 2 || d === 3 : d !== 1);
        };
        document.querySelectorAll('svg.qr').forEach(svg => {
            let s = Number(svg.dataset.seed);
            let d = '';
            for (let y = 0; y < N; y++) {
                for (let x = 0; x < N; x++) {
                    s = (s * 48271) % 2147483647;
                    const on = ring(x, y, 3, 3, 4) ?? ring(x, y, N - 4, 3, 4) ?? ring(x, y, 3, N - 4, 4) ?? ring(x, y, N - 7, N - 7, 2) ?? (s >> 12) % 2 === 0;
                    if (on) d += `M${x} ${y}h1v1h-1z`;
                }
            }
            svg.innerHTML = `<path d="${d}"/>`;
        });
    </script>
</body>
</html>
